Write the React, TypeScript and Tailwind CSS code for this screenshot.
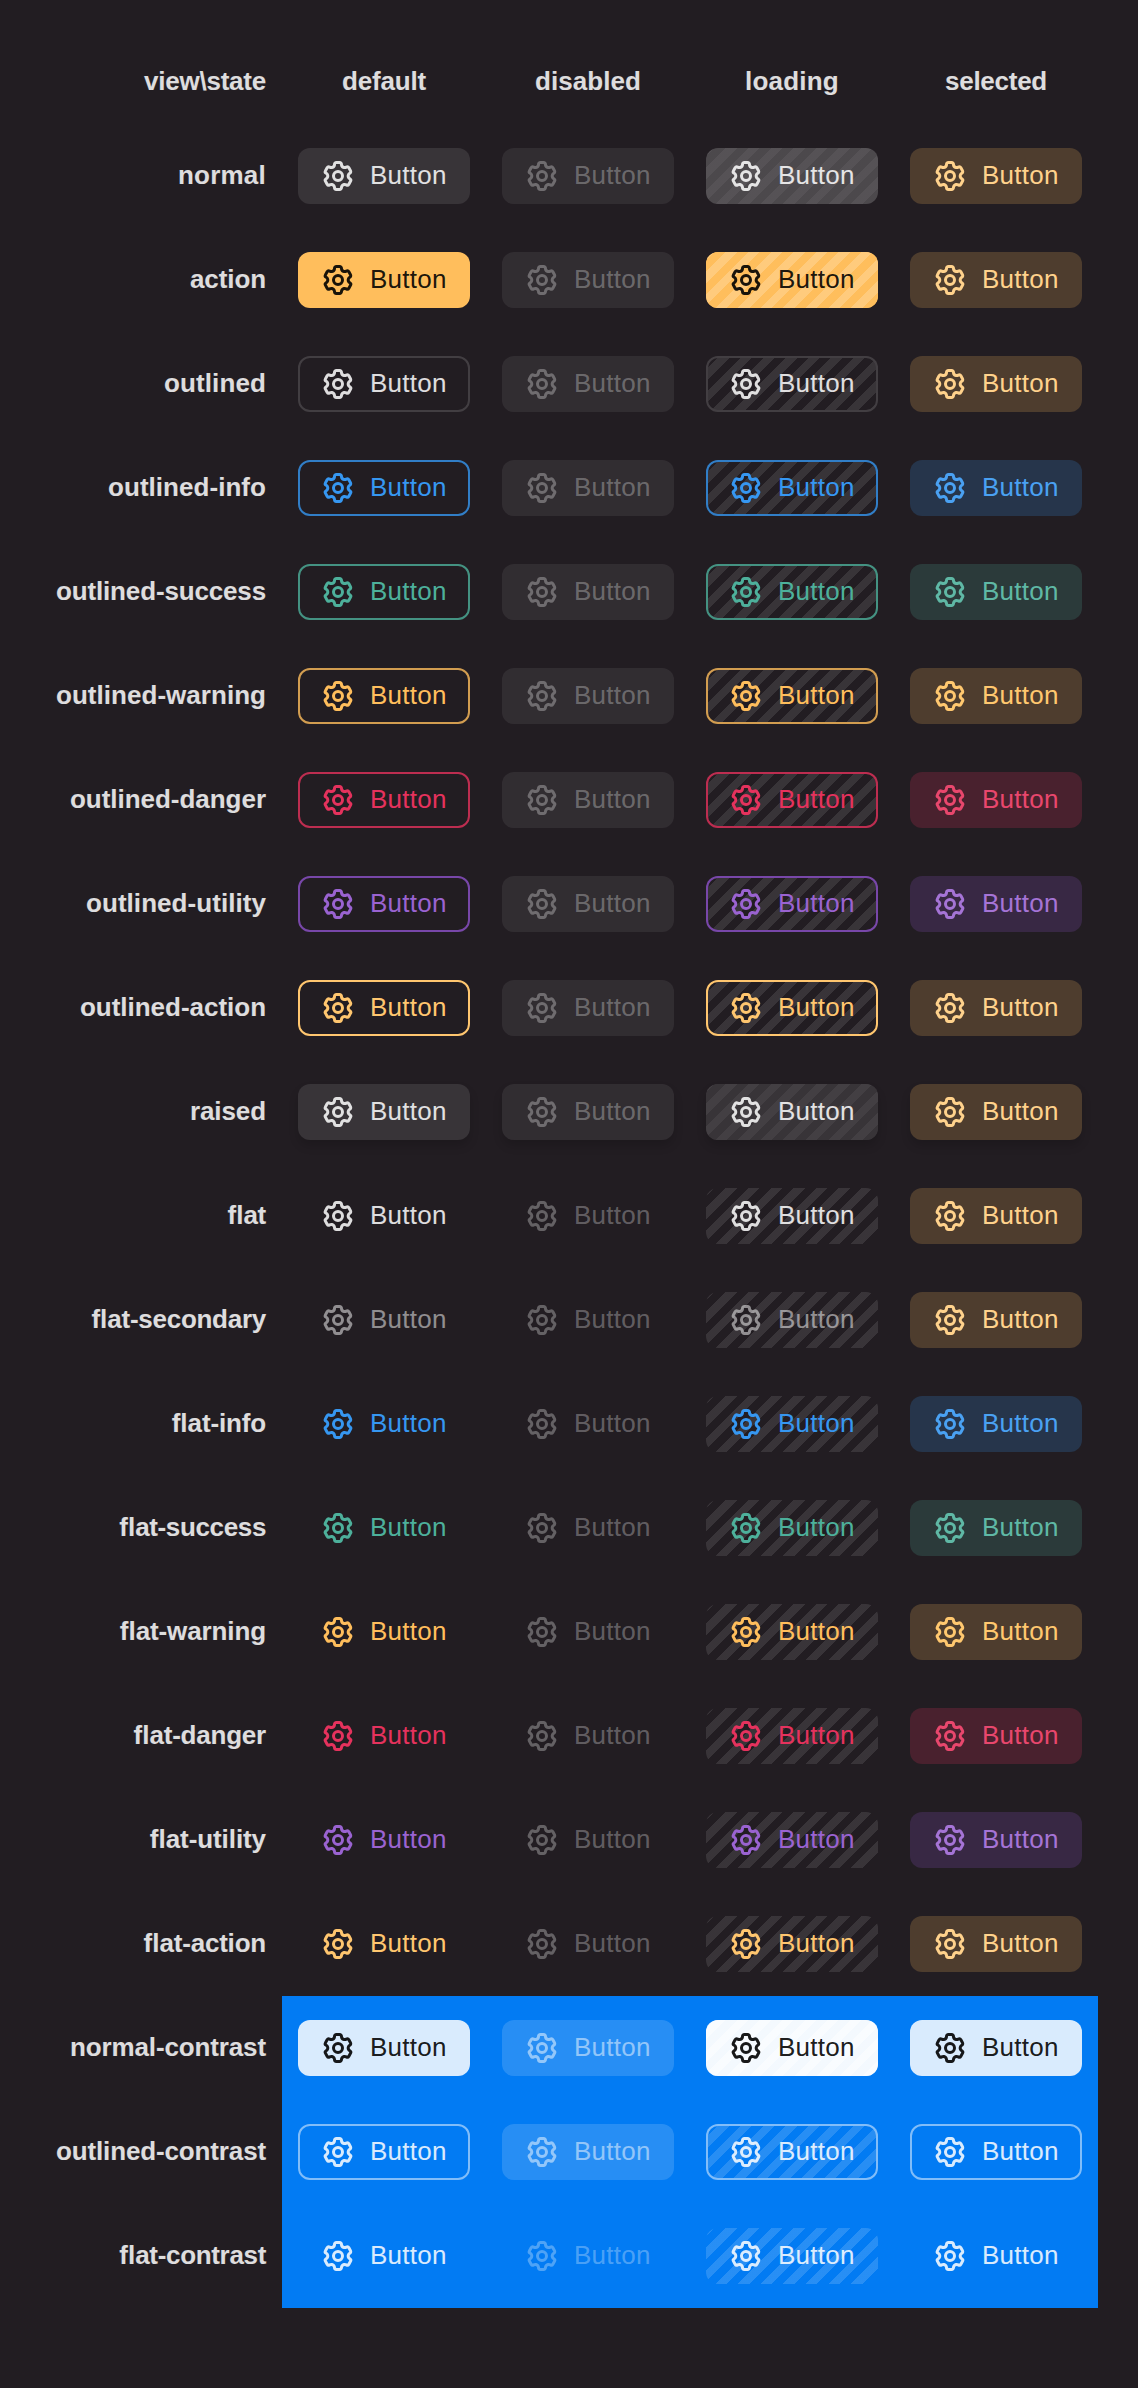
type Look = {
  view: string;
  cls: string;
  /** Fill under the content in each state. */
  base: string;
  disabled?: string;
  loading: string;
  selected: string;
  outlined?: boolean;
  border?: string;
  raised?: boolean;
  contrast?: boolean;
};

const SELECTED_BRAND = 'bg-[#4e3d2e] text-[#ffd28c]';
const SELECTED_INFO = 'bg-[#26354b] text-[#4aa1f2]';
const SELECTED_SUCCESS = 'bg-[#2b3a3a] text-[#5fb8a5]';
const SELECTED_WARNING = 'bg-[#4e3d2e] text-[#ffc86f]';
const SELECTED_DANGER = 'bg-[#49212e] text-[#e8476d]';
const SELECTED_UTILITY = 'bg-[#382844] text-[#a574d6]';
const DISABLED_FILLED = 'bg-white/[0.07] text-white/30';
const DISABLED_FLAT = 'text-white/30';

const STRIPES_CLEAR =
  'bg-[repeating-linear-gradient(-45deg,transparent,transparent_4px,rgb(255_255_255/0.1)_4px,rgb(255_255_255/0.1)_8px)]';
const STRIPES_NORMAL =
  'bg-[repeating-linear-gradient(-45deg,rgb(255_255_255/0.1),rgb(255_255_255/0.1)_4px,rgb(255_255_255/0.15)_4px,rgb(255_255_255/0.15)_8px)]';
const STRIPES_ACTION =
  'bg-[repeating-linear-gradient(-45deg,#ffbe5c,#ffbe5c_4px,#ffcb7d_4px,#ffcb7d_8px)]';
const STRIPES_RAISED =
  'bg-[repeating-linear-gradient(-45deg,#383438,#383438_4px,#433f43_4px,#433f43_8px)]';
const STRIPES_CONTRAST =
  'bg-[repeating-linear-gradient(-45deg,rgb(255_255_255/0.85),rgb(255_255_255/0.85)_4px,rgb(255_255_255/0.7)_4px,rgb(255_255_255/0.7)_8px)]';
const STRIPES_CONTRAST_CLEAR =
  'bg-[repeating-linear-gradient(-45deg,transparent,transparent_4px,rgb(255_255_255/0.15)_4px,rgb(255_255_255/0.15)_8px)]';

const outlined = (view: string, cls: string, border: string, selected: string): Look => ({
  view, cls, border, selected, base: '', loading: STRIPES_CLEAR, outlined: true,
});
const flat = (view: string, cls: string, selected: string): Look => ({
  view, cls, selected, base: '', disabled: DISABLED_FLAT, loading: STRIPES_CLEAR,
});

const LOOKS: Look[] = [
  { view: 'normal', cls: 'text-white/85', base: 'bg-white/10', loading: STRIPES_NORMAL, selected: SELECTED_BRAND },
  { view: 'action', cls: 'text-black/90', base: 'bg-[#ffbe5c]', loading: STRIPES_ACTION, selected: SELECTED_BRAND },
  outlined('outlined', 'text-white/85', 'border-white/15', SELECTED_BRAND),
  outlined('outlined-info', 'text-[#3697f1]', 'border-[#3697f1]/80', SELECTED_INFO),
  outlined('outlined-success', 'text-[#4db09b]', 'border-[#4db09b]/80', SELECTED_SUCCESS),
  outlined('outlined-warning', 'text-[#ffbe5c]', 'border-[#ffbe5c]/80', SELECTED_WARNING),
  outlined('outlined-danger', 'text-[#e5325d]', 'border-[#e5325d]/80', SELECTED_DANGER),
  outlined('outlined-utility', 'text-[#9a63d1]', 'border-[#8f52cc]/80', SELECTED_UTILITY),
  outlined('outlined-action', 'text-[#ffc66f]', 'border-[#ffc66f]', SELECTED_BRAND),
  { view: 'raised', cls: 'text-white/85', base: 'bg-[#383438]', loading: STRIPES_RAISED, selected: SELECTED_BRAND, raised: true },
  flat('flat', 'text-white/85', SELECTED_BRAND),
  flat('flat-secondary', 'text-white/50', SELECTED_BRAND),
  flat('flat-info', 'text-[#3697f1]', SELECTED_INFO),
  flat('flat-success', 'text-[#4db09b]', SELECTED_SUCCESS),
  flat('flat-warning', 'text-[#ffbe5c]', SELECTED_WARNING),
  flat('flat-danger', 'text-[#e5325d]', SELECTED_DANGER),
  flat('flat-utility', 'text-[#9a63d1]', SELECTED_UTILITY),
  flat('flat-action', 'text-[#ffc66f]', SELECTED_BRAND),
  {
    view: 'normal-contrast', cls: 'text-black/90', base: 'bg-white/85', disabled: 'bg-white/15 text-white/50',
    loading: STRIPES_CONTRAST, selected: 'bg-white/85 text-black/90', contrast: true,
  },
  {
    view: 'outlined-contrast', cls: 'text-white/85', base: '', disabled: 'bg-white/15 text-white/50',
    loading: STRIPES_CONTRAST_CLEAR, selected: 'text-white/85', outlined: true, border: 'border-white/50', contrast: true,
  },
  {
    view: 'flat-contrast', cls: 'text-white/85', base: '', disabled: 'text-white/30',
    loading: STRIPES_CONTRAST_CLEAR, selected: 'text-white/85', contrast: true,
  },
];

const STATES = ['default', 'disabled', 'loading', 'selected'] as const;
type State = (typeof STATES)[number];

/** Bold glyph advances in thousandths of an em. */
const ADVANCE: Record<string, number> = {
  a: 556, b: 611, c: 556, d: 611, e: 556, f: 333, g: 611, i: 278, l: 278, m: 889, n: 611,
  o: 611, r: 389, s: 556, t: 333, u: 611, v: 556, w: 778, y: 556, '-': 333, '\\': 278,
};

/** Letter spacing that brings a heading to the width of its pixel-snapped glyphs. */
function snapTracking(text: string) {
  let drift = 0;
  for (const ch of text) {
    const width = ((ADVANCE[ch] ?? 556) * 13) / 1000;
    drift += Math.round(width) - width;
  }
  return drift / text.length;
}

function Heading({ text }: { text: string }) {
  const ligature = text.startsWith('fl');
  return (
    <span className="font-bold" style={{ letterSpacing: `${snapTracking(text).toFixed(3)}px` }}>
      {ligature && <span className="tracking-[0]">fl</span>}
      {ligature ? text.slice(2) : text}
    </span>
  );
}

function Gear() {
  return (
    <svg viewBox="0 0 16 16" className="size-4 shrink-0" fill="currentColor" aria-hidden="true">
      <path
        fillRule="evenodd"
        clipRule="evenodd"
        d="M7.199 2H8.8a.2.2 0 0 1 .2.2c0 1.808 1.958 2.939 3.524 2.034a.199.199 0 0 1 .271.073l.802 1.388a.199.199 0 0 1-.073.272c-1.566.904-1.566 3.164 0 4.069a.199.199 0 0 1 .073.271l-.802 1.388a.199.199 0 0 1-.271.073C10.958 10.863 9 11.993 9 13.8a.2.2 0 0 1-.199.2H7.2a.199.199 0 0 1-.2-.2c0-1.808-1.958-2.938-3.524-2.034a.199.199 0 0 1-.272-.073l-.8-1.388a.199.199 0 0 1 .072-.271c1.566-.905 1.566-3.165 0-4.07a.199.199 0 0 1-.073-.271l.801-1.388a.199.199 0 0 1 .272-.073C5.042 5.138 7 4.007 7 2.2c0-.11.089-.199.199-.199ZM5.5 2.2c0-.94.76-1.7 1.699-1.7H8.8c.94 0 1.7.76 1.7 1.7a.85.85 0 0 0 1.274.735 1.699 1.699 0 0 1 2.32.622l.802 1.388c.469.813.19 1.851-.622 2.32a.85.85 0 0 0 0 1.472 1.7 1.7 0 0 1 .622 2.32l-.802 1.388a1.699 1.699 0 0 1-2.32.622.85.85 0 0 0-1.274.735c0 .939-.76 1.7-1.699 1.7H7.2a1.7 1.7 0 0 1-1.699-1.7.85.85 0 0 0-1.274-.735 1.698 1.698 0 0 1-2.32-.622l-.802-1.388a1.699 1.699 0 0 1 .622-2.32.85.85 0 0 0 0-1.471 1.699 1.699 0 0 1-.622-2.321l.801-1.388a1.699 1.699 0 0 1 2.32-.622A.85.85 0 0 0 5.5 2.2Zm4 5.8a1.5 1.5 0 1 1-3 0 1.5 1.5 0 0 1 3 0ZM11 8a3 3 0 1 1-6 0 3 3 0 0 1 6 0Z"
      />
    </svg>
  );
}

function ViewButton({ look, state }: { look: Look; state: State }) {
  const bordered =
    look.outlined && (state === 'default' || state === 'loading' || (look.contrast && state === 'selected'));
  const fill =
    state === 'disabled'
      ? (look.disabled ?? DISABLED_FILLED)
      : state === 'selected'
        ? look.selected
        : `${look.cls} ${look.base}`;
  return (
    <button
      type="button"
      disabled={state === 'disabled'}
      className={`relative block h-7 w-[86px] rounded-md ${fill} ${look.raised ? 'shadow-[0_3px_5px_rgb(0_0_0/0.15)]' : ''}`}
    >
      {(bordered || state === 'loading') && (
        <span
          className={`absolute inset-0 rounded-md bg-clip-padding bg-size-[150%] ${bordered ? `border ${look.border}` : ''} ${state === 'loading' ? look.loading : ''}`}
        />
      )}
      <span className="relative flex items-center gap-2 pl-3">
        <Gear />
        <span className="leading-7 tracking-[0.12px]">Button</span>
      </span>
    </button>
  );
}

export default function App() {
  return (
    <div className="h-[2388px] w-[1138px] bg-[#221d22]">
      <main className="h-[1194px] w-[569px] origin-top-left scale-200 pt-5 font-['Liberation_Sans',Arial,sans-serif] text-[13px] leading-[18px] text-white/85">
        <div className="flex h-[42px] items-center">
          <div className="w-[141px] shrink-0 pr-2 text-right">
            <Heading text="view\state" />
          </div>
          {STATES.map((state) => (
            <div key={state} className="w-[102px] text-center">
              <Heading text={state} />
            </div>
          ))}
        </div>
        {LOOKS.map((look) => (
          <div key={look.view} className="flex h-[52px] items-center">
            <div className="w-[141px] shrink-0 pr-2 text-right">
              <Heading text={look.view} />
            </div>
            <div className={`flex h-full items-center ${look.contrast ? 'bg-[#027bf3]' : ''}`}>
              {STATES.map((state) => (
                <div key={state} className="px-2">
                  <ViewButton look={look} state={state} />
                </div>
              ))}
            </div>
          </div>
        ))}
      </main>
    </div>
  );
}
